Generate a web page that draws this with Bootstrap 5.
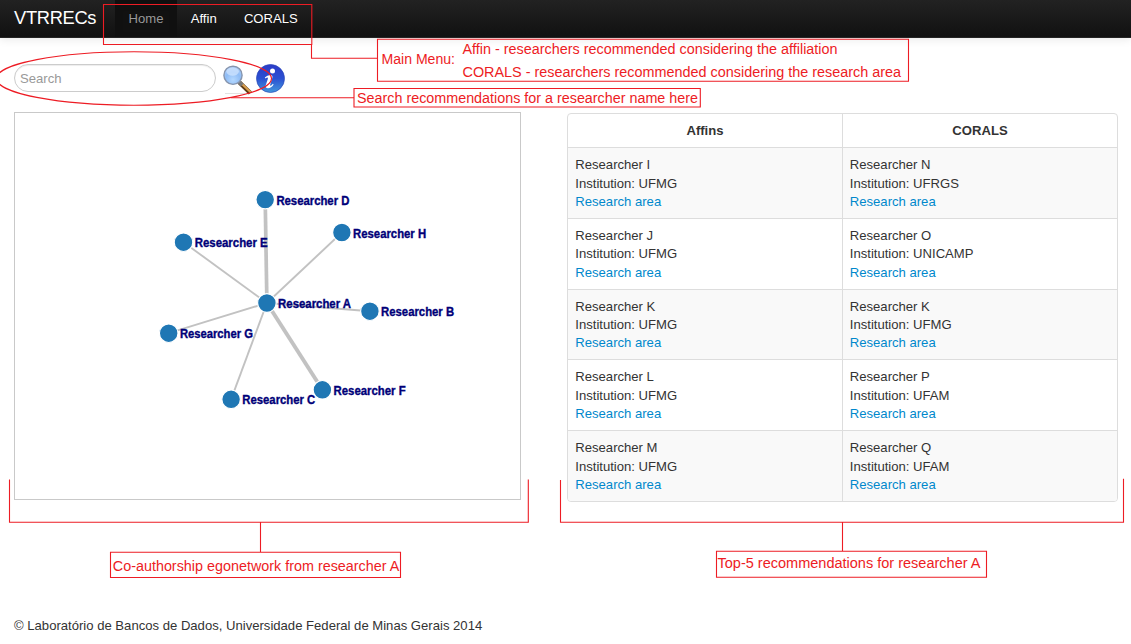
<!DOCTYPE html>
<html lang="en">
<head>
<meta charset="utf-8">
<title>VTRRECs</title>
<link href="https://cdn.jsdelivr.net/npm/bootstrap@5.3.0/dist/css/bootstrap.min.css" rel="stylesheet">
<script src="https://cdn.jsdelivr.net/npm/bootstrap@5.3.0/dist/js/bootstrap.bundle.min.js"></script>
<style>
body{font-family:"Liberation Sans",Arial,sans-serif;font-size:13.1px;line-height:18.4px;color:#333;background:#fff;height:644px;overflow:hidden}
.topbar{height:38px;background:linear-gradient(#222,#111);border-bottom:1px solid #252525;box-shadow:0 1px 9px rgba(0,0,0,.1);--bs-navbar-brand-font-size:18.3px}
.topbar .navbar-brand{width:87px;margin:0 14px 0 14px;color:#fff;line-height:36px;letter-spacing:-.3px}
.topbar .nav-link{color:#fff!important;line-height:37px;height:37px;padding:0 13.6px!important;text-shadow:0 -1px 0 rgba(0,0,0,.25)}
.topbar .nav-link.active{background:#111;color:#999!important;box-shadow:inset 0 3px 8px rgba(0,0,0,.125)}
.content{padding:26px 13px 0 14px}
.search{width:202px;height:28px;border:1px solid #ccc;font-size:13.1px;padding:0 5px;box-shadow:inset 0 1px 1px rgba(0,0,0,.075)}
.search::placeholder{color:#999;opacity:1}
.graph{width:507px;height:388px;border:1px solid #c9c9c9}
.recs{width:551px;margin-top:1px;border:1px solid #ddd;border-radius:4px;overflow:hidden}
.recs table{color:#333;table-layout:fixed;--bs-table-striped-bg:#f9f9f9;--bs-table-striped-color:#333;--bs-table-color:#333}
.recs th{height:33.4px;padding:7.8px 7.5px 7px!important;border:0}
.recs td{height:70.75px;padding:7.9px 7px 6.4px 7.3px!important;border:0;border-top:1px solid #ddd}
.recs th+th,.recs td+td{border-left:1px solid #ddd}
.recs td+td{padding-left:6.8px!important}
.recs a{color:#08c;text-decoration:none}
.notes{pointer-events:none;z-index:1100}
.panels{margin-top:17px}
footer{margin-top:115px}
</style>
</head>
<body class="position-relative">
<nav class="navbar topbar navbar-expand p-0 align-items-start">
  <a class="navbar-brand p-0" href="#">VTRRECs</a>
  <ul class="navbar-nav">
    <li class="nav-item"><a class="nav-link active" href="#">Home</a></li>
    <li class="nav-item"><a class="nav-link" href="#">Affin</a></li>
    <li class="nav-item"><a class="nav-link" href="#">CORALS</a></li>
  </ul>
</nav>
<main class="content">
  <form class="d-flex align-items-start">
    <input class="form-control rounded-pill search flex-shrink-0" type="text" placeholder="Search">
    <svg class="flex-shrink-0" width="72" height="31" viewBox="216 64 72 31">
      <defs>
        <radialGradient id="lens" cx=".5" cy=".75" r=".75"><stop offset="0" stop-color="#b4d8ff"/><stop offset=".55" stop-color="#8fbcf5"/><stop offset="1" stop-color="#a9cbf8"/></radialGradient>
        <linearGradient id="ball" x2="0" y2="1"><stop offset="0" stop-color="#2c3bc8"/><stop offset=".5" stop-color="#2b50d2"/><stop offset="1" stop-color="#4298dc"/></linearGradient>
      </defs>
      <path d="M225 93.1h24v.8h-24z" fill="#ddd"/>
      <path d="M239.5 82.5l10.8 10.5" stroke="#5d3a16" stroke-width="4.4"/>
      <path d="M239.9 82l10.8 10.3" stroke="#d9a04f" stroke-width="2.2"/>
      <path d="M238.8 81.8l3.4 3.3" stroke="#777" stroke-width="4"/>
      <circle cx="233" cy="75.3" r="9.1" fill="url(#lens)" stroke="#8795ad" stroke-width="1.4"/>
      <ellipse cx="232.6" cy="71.6" rx="6.3" ry="4.2" fill="#d9eaff" opacity=".65"/>
      <circle cx="270.5" cy="78.5" r="14" fill="url(#ball)" stroke="#2947b8" stroke-width=".7"/>
      <circle cx="272.5" cy="71" r="2.5" fill="#fff"/>
      <path d="M264.8 77.6q2.6-2.7 5.6-2.6 2.7.1 1.9 3l-2.1 6.4q-.5 1.6.6 1.3 1-.4 2.1-1.9l.7.7q-2.5 3.9-5.7 3.8-3-.2-2.1-3.2l2-6.2q.4-1.6-.4-1.5-.8 0-1.8 1.1z" fill="#fff"/>
    </svg>
  </form>
  <div class="d-flex justify-content-between align-items-start panels">
    <div class="graph">
      <svg class="d-block" width="505" height="386" viewBox="15 113 505 386" id="network" font-family="Liberation Sans, sans-serif" font-size="12" font-weight="bold"></svg>
    </div>
    <div class="recs">
      <table class="table table-striped mb-0">
        <thead><tr class="text-center"><th>Affins</th><th>CORALS</th></tr></thead>
        <tbody>
          <tr><td>Researcher I<br>Institution: UFMG<br><a href="#">Research area</a></td><td>Researcher N<br>Institution: UFRGS<br><a href="#">Research area</a></td></tr>
          <tr><td>Researcher J<br>Institution: UFMG<br><a href="#">Research area</a></td><td>Researcher O<br>Institution: UNICAMP<br><a href="#">Research area</a></td></tr>
          <tr><td>Researcher K<br>Institution: UFMG<br><a href="#">Research area</a></td><td>Researcher K<br>Institution: UFMG<br><a href="#">Research area</a></td></tr>
          <tr><td>Researcher L<br>Institution: UFMG<br><a href="#">Research area</a></td><td>Researcher P<br>Institution: UFAM<br><a href="#">Research area</a></td></tr>
          <tr><td>Researcher M<br>Institution: UFMG<br><a href="#">Research area</a></td><td>Researcher Q<br>Institution: UFAM<br><a href="#">Research area</a></td></tr>
        </tbody>
      </table>
    </div>
  </div>
  <footer>© Laboratório de Bancos de Dados, Universidade Federal de Minas Gerais 2014</footer>
</main>

<!-- Callouts laid over the page -->
<svg class="notes position-absolute top-0 start-0" width="1131" height="644" viewBox="0 0 1131 644" fill="none" stroke="#ed1c24" stroke-width="1.1">
  <path d="M103.5 4.5h208.3v40H103.5zM311.5 44.5v13.8h66M377.5 39.3h531v42h-531zM231 97.7h123M354 88.5h346.3v18.5H354z"/>
  <ellipse cx="134" cy="78.5" rx="137.5" ry="26.7"/>
  <path d="M9.5 479.5v42.8h518.8v-42.8M260.5 522.3v30M110.5 552.3h290v25.2h-290z"/>
  <path d="M560.5 480v42.3h563v-43.5M842.5 522.3v29M716.5 551.3h270v26h-270z"/>
  <g fill="#ed1c24" stroke="none" font-family="Liberation Sans, Arial, sans-serif" font-size="15.4">
    <text x="381.5" y="64.3" textLength="73.5" lengthAdjust="spacingAndGlyphs">Main Menu:</text>
    <text x="462.5" y="54.3" textLength="375" lengthAdjust="spacingAndGlyphs">Affin - researchers recommended considering the affiliation</text>
    <text x="462.5" y="77.3" textLength="438.5" lengthAdjust="spacingAndGlyphs">CORALS - researchers recommended considering the research area</text>
    <text x="357" y="103.2" textLength="341" lengthAdjust="spacingAndGlyphs">Search recommendations for a researcher name here</text>
    <text x="112.8" y="570.7" textLength="286.5" lengthAdjust="spacingAndGlyphs">Co-authorship egonetwork from researcher A</text>
    <text x="717.5" y="568" textLength="263" lengthAdjust="spacingAndGlyphs">Top-5 recommendations for researcher A</text>
  </g>
</svg>
<script>
// id, x, y, weight of the link to A
const people=[['D',265.2,199.6,3.7],['H',341.9,232.5,1.9],['E',183.5,242.2,1.9],['B',369.9,311.2,1.9],['G',168.7,333.2,1.9],['F',322.4,389.8,3.9],['C',231.1,399.3,1.9],['A',266.9,303,0]];
const hub=people[7];
let out='';
for(const [,x,y,w] of people) if(w) out+=`<line x1="${hub[1]}" y1="${hub[2]}" x2="${x}" y2="${y}" stroke="#c2c2c2" stroke-width="${w}"/>`;
for(const [,x,y] of people) out+=`<circle cx="${x}" cy="${y}" r="9.3" fill="#1f77b4" stroke="#fff" stroke-width="1.2"/>`;
for(const [n,x,y] of people) out+=`<text x="${x+11.2}" y="${y+5}" fill="#000078" stroke="#000078" stroke-width=".35" textLength="${n==='F'?72:73}" lengthAdjust="spacingAndGlyphs">Researcher ${n}</text>`;
document.getElementById('network').innerHTML=out;
</script>
</body>
</html>
